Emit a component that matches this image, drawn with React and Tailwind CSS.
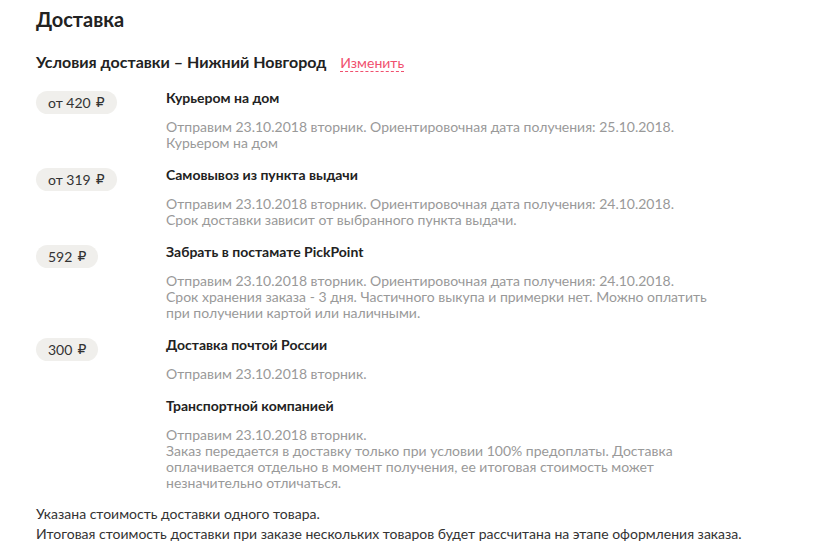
const options = [
  {
    price: 'от 420',
    title: 'Курьером на дом',
    lines: [
      'Отправим 23.10.2018 вторник. Ориентировочная дата получения: 25.10.2018.',
      'Курьером на дом',
    ],
  },
  {
    price: 'от 319',
    title: 'Самовывоз из пункта выдачи',
    lines: [
      'Отправим 23.10.2018 вторник. Ориентировочная дата получения: 24.10.2018.',
      'Срок доставки зависит от выбранного пункта выдачи.',
    ],
  },
  {
    price: '592',
    title: 'Забрать в постамате PickPoint',
    lines: [
      'Отправим 23.10.2018 вторник. Ориентировочная дата получения: 24.10.2018.',
      'Срок хранения заказа - 3 дня. Частичного выкупа и примерки нет. Можно оплатить при получении картой или наличными.',
    ],
  },
  {
    price: '300',
    title: 'Доставка почтой России',
    lines: ['Отправим 23.10.2018 вторник.'],
  },
  {
    price: null,
    title: 'Транспортной компанией',
    lines: [
      'Отправим 23.10.2018 вторник.',
      'Заказ передается в доставку только при условии 100% предоплаты. Доставка оплачивается отдельно в момент получения, ее итоговая стоимость может незначительно отличаться.',
    ],
  },
]

function Option({ price, title, lines }) {
  return (
    <div className="flex">
      <div className="w-[130px] shrink-0 pt-[2px]">
        {price && (
          <span className="inline-flex h-[23px] items-center rounded-full bg-[#f0efec] px-3 text-[14px] text-[#333]">
            {price}
            <span className="ml-[5px] font-['DejaVu_Sans',sans-serif] text-[14px]">₽</span>
          </span>
        )}
      </div>
      <div className="w-[545px]">
        <p className="text-[14px] font-bold leading-[20px] text-[#222]">{title}</p>
        <div className="mt-[11px] text-[14px] leading-[16px] text-[#999]">
          {lines.map((l, i) => (
            <p key={i}>{l}</p>
          ))}
        </div>
      </div>
    </div>
  )
}

export default function App() {
  return (
    <div className="min-h-screen bg-white pl-9 pt-[5px] font-['Lato',sans-serif] text-[#333]">
      <h1 className="text-[20px] font-bold leading-[28px] text-[#222]">Доставка</h1>

      <div className="mt-[17px] flex items-baseline">
        <h2 className="text-[16px] font-bold leading-[24px] text-[#222]">Условия доставки – Нижний Новгород</h2>
        <a className="ml-[14px] border-b border-dashed border-[#f0506e] text-[14px] leading-[16px] text-[#f0506e]">
          Изменить
        </a>
      </div>

      <div className="mt-[14px] flex flex-col gap-[14px]">
        {options.map((o, i) => (
          <Option key={i} {...o} />
        ))}
      </div>

      <div className="mt-[13px] text-[14px] leading-[20px] text-[#333]">
        <p>Указана стоимость доставки одного товара.</p>
        <p>Итоговая стоимость доставки при заказе нескольких товаров будет рассчитана на этапе оформления заказа.</p>
      </div>
    </div>
  )
}
